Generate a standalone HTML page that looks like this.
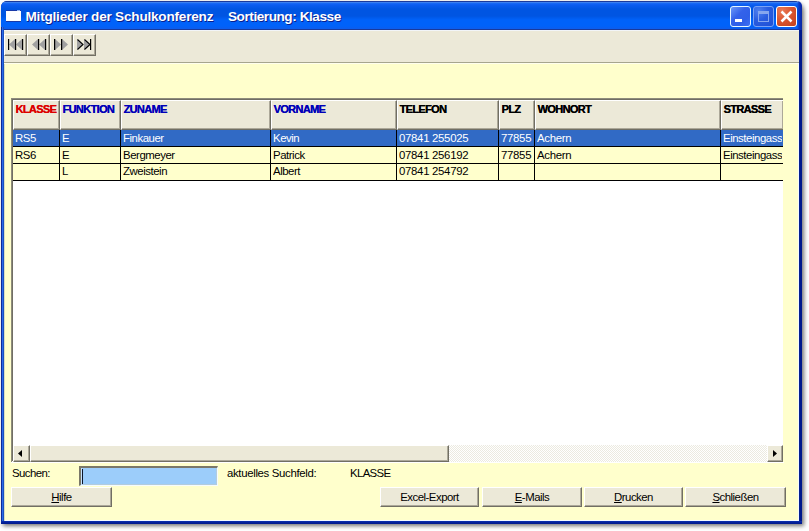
<!DOCTYPE html>
<html><head><meta charset="utf-8">
<style>
*{box-sizing:border-box;margin:0;padding:0}
html,body{width:809px;height:531px;overflow:hidden;background:#fff;font-family:"Liberation Sans",sans-serif;position:relative}
div,span{position:absolute}
#shadow{left:1px;top:1px;width:801px;height:523px;border-radius:6px 8px 0 0;background:#0a2896;box-shadow:2px 2px 4px 0px rgba(0,0,0,.55)}
#title{left:1px;top:1px;width:801px;height:29px;border-radius:6px 8px 0 0;background:linear-gradient(to bottom,#1a3a9c 0px,#1a3a9c 1px,#3a80f0 1px,#3a80f0 2px,#1a6af5 2px,#0a5cf0 4px,#0055e2 8px,#0055e2 15px,#0062fa 19px,#0062fa 25px,#0a5ef0 27px,#0a5ef0 28px,#1a3a9c 28px)}
#frameL{left:1px;top:27px;width:3px;height:497px;background:linear-gradient(to right,#0a2a9a 0,#0a2a9a 1px,#2a6ae8 1px,#2a6ae8 2px,#1a50c0 2px)}
#hiL{left:4px;top:64px;width:1px;height:457px;background:#D8DEC0}
#frameR{left:799px;top:27px;width:3px;height:497px;background:linear-gradient(to right,#0a2896,#001a8c 1px)}
#titleR{left:797px;top:1px;width:5px;height:29px;border-top-right-radius:8px;background:linear-gradient(to right,rgba(0,40,190,0) 0,#0a3ac8 2px,#0a2aa8 4px)}
#frameB{left:1px;top:521px;width:801px;height:3px;background:linear-gradient(to bottom,#0a30b0,#001a90 2px)}
#hiB{left:4px;top:520px;width:795px;height:1px;background:#f4faff}
#hiR{left:798px;top:30px;width:1px;height:491px;background:#f4faff}
#content{left:4px;top:30px;width:795px;height:491px;background:#FFFFCC}
#toolbar{left:4px;top:30px;width:795px;height:33px;background:#ECE9D8;border-top:1px solid #F2F5F8;border-bottom:1px solid #A7A68E}
#tbhi{left:4px;top:63px;width:794px;height:1px;background:#FFFFEE}
.t{white-space:nowrap;line-height:13px;font-size:11px;color:#000}
.b{font-weight:bold}
.sb{background:#ECE9D8;border-top:1px solid #fff;border-left:1px solid #fff;border-right:1px solid #716F64;border-bottom:1px solid #716F64;box-shadow:inset -1px -1px 0 #ACA899}
.sr{letter-spacing:-0.3px}
.btn{top:487px;height:20px;background:#ECE9D8;border-top:1px solid #fff;border-left:1px solid #fff;border-right:1px solid #716F64;border-bottom:1px solid #716F64;box-shadow:inset -1px -1px 0 #ACA899;font-size:11.4px;line-height:18.6px;text-align:center;white-space:nowrap;letter-spacing:-0.5px;color:#000}
.btn u{text-decoration:underline;text-underline-offset:1px}
.hd{letter-spacing:-0.65px;text-shadow:0.2px 0 0 currentColor}
.rw{letter-spacing:-0.3px}
.nb{top:34px;width:23px;height:22px;background:#ECE9D8;border-top:1px solid #fff;border-left:1px solid #fff;border-right:1px solid #716F64;border-bottom:1px solid #716F64;box-shadow:inset -1px -1px 0 #ACA899}
</style></head><body>
<div id="shadow"></div>
<div id="title"></div>
<div id="frameL"></div>
<div id="frameR"></div><div id="titleR"></div>
<div id="frameB"></div>
<div id="content"></div><div id="hiB"></div><div id="hiR"></div><div id="hiL"></div>
<div id="toolbar"></div><div id="tbhi"></div>
<div class="nb" style="left:4px"></div>
<div class="nb" style="left:27px"></div>
<div class="nb" style="left:50px"></div>
<div class="nb" style="left:73px"></div>
<div style="left:6px;top:10px;width:15px;height:12px;background:#fff;border-top:1px solid #1a3aa8;border-bottom:1px solid #1a3aa8"></div><div style="left:17px;top:10px;width:3px;height:1px;background:#9ab8f0"></div>
<div class="t b" style="left:25.5px;top:9px;font-size:13.6px;line-height:16px;color:#fff;text-shadow:1px 1px 0 #0a1e8c;letter-spacing:-0.22px">Mitglieder der Schulkonferenz</div>
<div class="t b" style="left:228px;top:9px;font-size:13.6px;line-height:16px;color:#fff;text-shadow:1px 1px 0 #0a1e8c;letter-spacing:-0.45px">Sortierung: Klasse</div>
<div style="left:730px;top:6px;width:21px;height:21px;border:1px solid #E4F6FF;border-radius:3px;background:linear-gradient(135deg,#6a98f8,#3462ea 40%,#2f5fe8 70%,#3e70f4)"></div>
<div style="left:735px;top:19px;width:7px;height:3px;background:#fff"></div>
<div style="left:753px;top:6px;width:21px;height:21px;border:1px solid #7aa2f4;border-radius:3px;background:radial-gradient(circle at 25% 20%,#4f80ee,#2a5de0 45%,#1f4fd4)"></div>
<div style="left:758px;top:11px;width:11px;height:11px;border:1px solid #86a6ee;border-top:3px solid #86a6ee"></div>
<div style="left:776px;top:6px;width:21px;height:21px;border:1px solid #fff;border-radius:3px;background:radial-gradient(circle at 25% 20%,#ea7a56,#d9542f 50%,#c2401c)"></div>
<svg style="position:absolute;left:776px;top:6px" width="21" height="21"><path d="M5.5 5.5 L15.5 15.5 M15.5 5.5 L5.5 15.5" stroke="#fff" stroke-width="2.5"/></svg>
<svg style="position:absolute;left:0;top:0" width="100" height="62">
 <g fill="#a0a0a0">
  <path d="M9 44.5 L15 39 L15 50 Z"/><path d="M16 44.5 L22 39 L22 50 Z"/>
  <path d="M32 44.5 L38 39 L38 50 Z"/><path d="M39 44.5 L45 39 L45 50 Z"/>
  <path d="M55 39 L61 44.5 L55 50 Z"/><path d="M62 39 L68 44.5 L62 50 Z"/>
  <path d="M77 39 L83 44.5 L77 50 Z"/><path d="M84 39 L90 44.5 L84 50 Z"/>
 </g>
 <g fill="#000">
  <rect x="8" y="39" width="1.2" height="11"/><rect x="15" y="39" width="1.2" height="11"/><rect x="22" y="39" width="1.2" height="11"/>
  <rect x="38" y="39" width="1.2" height="11"/><rect x="45" y="39" width="1.2" height="11"/>
  <rect x="54" y="39" width="1.2" height="11"/><rect x="61" y="39" width="1.2" height="11"/>
  <rect x="90" y="39" width="1.2" height="11"/>
 </g>
 <path d="M77.5 39.5 L83 44.5 L77.5 49.5 M84.5 39.5 L90 44.5 L84.5 49.5" stroke="#000" stroke-width="1.1" fill="none"/>
</svg>
<div style="left:11px;top:98px;width:772px;height:364px;background:#fff;border-left:1px solid #8E8C7C;border-top:1px solid #8E8C7C"></div>
<div style="left:12px;top:99px;width:771px;height:362px;border-left:1px solid #716F64;border-top:1px solid #716F64"></div>
<div style="left:13px;top:100px;width:47px;height:30px;background:#ECE9D8;border-top:1px solid #fff;border-left:1px solid #fff;border-bottom:1px solid #716F64;border-right:1px solid #716F64;box-shadow:inset -1px -1px 0 #ACA899"></div>
<div class="t b hd" style="left:15.5px;top:103px;color:#dc0000">KLASSE</div>
<div style="left:60px;top:100px;width:61px;height:30px;background:#ECE9D8;border-top:1px solid #fff;border-left:1px solid #fff;border-bottom:1px solid #716F64;border-right:1px solid #716F64;box-shadow:inset -1px -1px 0 #ACA899"></div>
<div class="t b hd" style="left:62.5px;top:103px;color:#0000b8">FUNKTION</div>
<div style="left:121px;top:100px;width:150px;height:30px;background:#ECE9D8;border-top:1px solid #fff;border-left:1px solid #fff;border-bottom:1px solid #716F64;border-right:1px solid #716F64;box-shadow:inset -1px -1px 0 #ACA899"></div>
<div class="t b hd" style="left:123.5px;top:103px;color:#0000b8">ZUNAME</div>
<div style="left:271px;top:100px;width:126px;height:30px;background:#ECE9D8;border-top:1px solid #fff;border-left:1px solid #fff;border-bottom:1px solid #716F64;border-right:1px solid #716F64;box-shadow:inset -1px -1px 0 #ACA899"></div>
<div class="t b hd" style="left:273.5px;top:103px;color:#0000b8">VORNAME</div>
<div style="left:397px;top:100px;width:102px;height:30px;background:#ECE9D8;border-top:1px solid #fff;border-left:1px solid #fff;border-bottom:1px solid #716F64;border-right:1px solid #716F64;box-shadow:inset -1px -1px 0 #ACA899"></div>
<div class="t b hd" style="left:399.5px;top:103px;color:#000">TELEFON</div>
<div style="left:499px;top:100px;width:36px;height:30px;background:#ECE9D8;border-top:1px solid #fff;border-left:1px solid #fff;border-bottom:1px solid #716F64;border-right:1px solid #716F64;box-shadow:inset -1px -1px 0 #ACA899"></div>
<div class="t b hd" style="left:501.5px;top:103px;color:#000">PLZ</div>
<div style="left:535px;top:100px;width:186px;height:30px;background:#ECE9D8;border-top:1px solid #fff;border-left:1px solid #fff;border-bottom:1px solid #716F64;border-right:1px solid #716F64;box-shadow:inset -1px -1px 0 #ACA899"></div>
<div class="t b hd" style="left:537.5px;top:103px;color:#000">WOHNORT</div>
<div style="left:721px;top:100px;width:62px;height:30px;background:#ECE9D8;border-top:1px solid #fff;border-left:1px solid #fff;border-bottom:1px solid #716F64;box-shadow:inset -1px -1px 0 #ACA899"></div>
<div class="t b hd" style="left:723.5px;top:103px;color:#000">STRASSE</div>
<div style="left:13px;top:130px;width:770px;height:17px;background:#316AC5;border-bottom:1px solid #000"></div>
<div style="left:59px;top:130px;width:1px;height:17px;background:#000"></div>
<div class="t rw" style="font-size:11.4px;letter-spacing:-0.45px;left:15px;top:132px;width:44px;overflow:hidden;color:#fff">RS5</div>
<div style="left:120px;top:130px;width:1px;height:17px;background:#000"></div>
<div class="t rw" style="font-size:11.4px;letter-spacing:-0.45px;left:62px;top:132px;width:58px;overflow:hidden;color:#fff">E</div>
<div style="left:270px;top:130px;width:1px;height:17px;background:#000"></div>
<div class="t rw" style="font-size:11.4px;letter-spacing:-0.45px;left:123px;top:132px;width:147px;overflow:hidden;color:#fff">Finkauer</div>
<div style="left:396px;top:130px;width:1px;height:17px;background:#000"></div>
<div class="t rw" style="font-size:11.4px;letter-spacing:-0.45px;left:273px;top:132px;width:123px;overflow:hidden;color:#fff">Kevin</div>
<div style="left:498px;top:130px;width:1px;height:17px;background:#000"></div>
<div class="t rw" style="font-size:11.4px;letter-spacing:-0.3px;left:399px;top:132px;width:99px;overflow:hidden;color:#fff">07841 255025</div>
<div style="left:534px;top:130px;width:1px;height:17px;background:#000"></div>
<div class="t rw" style="font-size:11.4px;letter-spacing:-0.3px;left:501px;top:132px;width:33px;overflow:hidden;color:#fff">77855</div>
<div style="left:720px;top:130px;width:1px;height:17px;background:#000"></div>
<div class="t rw" style="font-size:11.4px;letter-spacing:-0.3px;left:537px;top:132px;width:183px;overflow:hidden;color:#fff">Achern</div>
<div class="t rw" style="font-size:11.4px;letter-spacing:-0.45px;left:723px;top:132px;width:59px;overflow:hidden;color:#fff">Einsteingasse 5</div>
<div style="left:13px;top:147px;width:770px;height:17px;background:#FFFFCC;border-bottom:1px solid #000"></div>
<div style="left:59px;top:147px;width:1px;height:17px;background:#000"></div>
<div class="t rw" style="font-size:11.4px;letter-spacing:-0.45px;left:15px;top:149px;width:44px;overflow:hidden;color:#000">RS6</div>
<div style="left:120px;top:147px;width:1px;height:17px;background:#000"></div>
<div class="t rw" style="font-size:11.4px;letter-spacing:-0.45px;left:62px;top:149px;width:58px;overflow:hidden;color:#000">E</div>
<div style="left:270px;top:147px;width:1px;height:17px;background:#000"></div>
<div class="t rw" style="font-size:11.4px;letter-spacing:-0.45px;left:123px;top:149px;width:147px;overflow:hidden;color:#000">Bergmeyer</div>
<div style="left:396px;top:147px;width:1px;height:17px;background:#000"></div>
<div class="t rw" style="font-size:11.4px;letter-spacing:-0.45px;left:273px;top:149px;width:123px;overflow:hidden;color:#000">Patrick</div>
<div style="left:498px;top:147px;width:1px;height:17px;background:#000"></div>
<div class="t rw" style="font-size:11.4px;letter-spacing:-0.3px;left:399px;top:149px;width:99px;overflow:hidden;color:#000">07841 256192</div>
<div style="left:534px;top:147px;width:1px;height:17px;background:#000"></div>
<div class="t rw" style="font-size:11.4px;letter-spacing:-0.3px;left:501px;top:149px;width:33px;overflow:hidden;color:#000">77855</div>
<div style="left:720px;top:147px;width:1px;height:17px;background:#000"></div>
<div class="t rw" style="font-size:11.4px;letter-spacing:-0.3px;left:537px;top:149px;width:183px;overflow:hidden;color:#000">Achern</div>
<div class="t rw" style="font-size:11.4px;letter-spacing:-0.45px;left:723px;top:149px;width:59px;overflow:hidden;color:#000">Einsteingasse 5</div>
<div style="left:13px;top:164px;width:770px;height:17px;background:#FFFFCC;border-bottom:1px solid #000"></div>
<div style="left:59px;top:164px;width:1px;height:17px;background:#000"></div>
<div style="left:120px;top:164px;width:1px;height:17px;background:#000"></div>
<div class="t rw" style="font-size:11.4px;letter-spacing:-0.45px;left:62px;top:165px;width:58px;overflow:hidden;color:#000">L</div>
<div style="left:270px;top:164px;width:1px;height:17px;background:#000"></div>
<div class="t rw" style="font-size:11.4px;letter-spacing:-0.45px;left:123px;top:165px;width:147px;overflow:hidden;color:#000">Zweistein</div>
<div style="left:396px;top:164px;width:1px;height:17px;background:#000"></div>
<div class="t rw" style="font-size:11.4px;letter-spacing:-0.45px;left:273px;top:165px;width:123px;overflow:hidden;color:#000">Albert</div>
<div style="left:498px;top:164px;width:1px;height:17px;background:#000"></div>
<div class="t rw" style="font-size:11.4px;letter-spacing:-0.3px;left:399px;top:165px;width:99px;overflow:hidden;color:#000">07841 254792</div>
<div style="left:534px;top:164px;width:1px;height:17px;background:#000"></div>
<div style="left:720px;top:164px;width:1px;height:17px;background:#000"></div>
<div class="sb" style="left:13px;top:445px;width:17px;height:17px"></div>
<div class="sb" style="left:30px;top:445px;width:419px;height:17px"></div>
<div style="left:449px;top:445px;width:318px;height:17px;background-image:conic-gradient(#fff 25%,#ECEAE0 0 50%,#fff 0 75%,#ECEAE0 0);background-size:2px 2px"></div>
<div class="sb" style="left:767px;top:445px;width:16px;height:17px"></div>
<svg style="position:absolute;left:0;top:440px" width="809" height="25">
 <path d="M18 13.5 L22 10 L22 17 Z" fill="#000"/>
 <path d="M777 13.5 L773 10 L773 17 Z" fill="#000"/>
</svg>
<div class="t sr" style="left:12px;top:466.6px;font-size:11.4px;letter-spacing:-0.55px">Suchen:</div>
<div style="left:79px;top:466px;width:139px;height:20px;background:#9CCDFA;border-top:2px solid #7A7868;border-left:2px solid #7A7868;border-bottom:1px solid #F4FCFF;border-right:1px solid #F4FCFF;box-shadow:inset -1px -1px 0 #B4CCDC"></div>
<div style="left:81px;top:468px;width:1px;height:17px;background:#C8E4FF"></div>
<div style="left:82px;top:469px;width:1px;height:15px;background:#0a1428"></div>
<div style="left:11px;top:462px;width:773px;height:1px;background:#fff"></div>
<div class="t sr" style="left:227px;top:466.6px;font-size:11.4px;letter-spacing:-0.33px">aktuelles Suchfeld:</div>
<div class="t sr" style="left:350px;top:466.6px;font-size:11.4px;letter-spacing:-0.65px">KLASSE</div>
<div class="btn" style="left:11px;width:101px"><u>H</u>ilfe</div>
<div class="btn" style="left:380px;width:99px">Excel-Export</div>
<div class="btn" style="left:482px;width:100px"><u>E</u>-Mails</div>
<div class="btn" style="left:584px;width:99px"><u>D</u>rucken</div>
<div class="btn" style="left:685px;width:101px"><u>S</u>chließen</div>
</body></html>
